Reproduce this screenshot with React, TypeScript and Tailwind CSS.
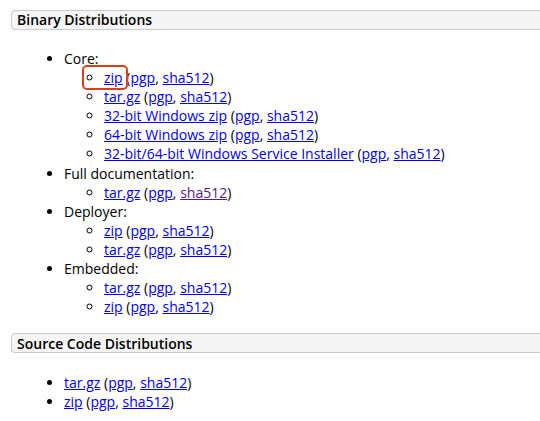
const font = { fontFamily: '"Open Sans", "Noto Sans", sans-serif' };

function A({ children, visited }: { children: React.ReactNode; visited?: boolean }) {
  return (
    <a href="#" className={`underline ${visited ? 'text-[#551a8b]' : 'text-[#0000ee]'}`}>
      {children}
    </a>
  );
}

function Sig({ visited }: { visited?: boolean }) {
  return (
    <>
      {' '}(<A>pgp</A>, <A visited={visited}>sha512</A>)
    </>
  );
}

function Item({ label, visited, boxed }: { label: string; visited?: boolean; boxed?: boolean }) {
  return (
    <li className="relative">
      {boxed && (
        <span className="absolute left-[-22px] top-[-3px] w-[46px] h-[25px] border-2 border-[#dd3f1c] rounded-[5px]" />
      )}
      <A>{label}</A>
      <Sig visited={visited} />
    </li>
  );
}

function Header({ title }: { title: string }) {
  return (
    <h3 className="ml-[11px] h-[20px] flex items-center pl-[5px] bg-[#f5f5f5] border border-r-0 border-[#cccccc] rounded-l-[4px] text-[14px] font-semibold text-black">
      {title}
    </h3>
  );
}

export default function App() {
  return (
    <div className="bg-white w-[540px] h-[421px] overflow-hidden pt-[10px] text-[14px] leading-[19.1px] text-black" style={font}>
      <Header title="Binary Distributions" />
      <ul className="list-disc pl-[64px] mt-[19px]">
        <li>
          Core:
          <ul className="list-[circle] pl-[40px]">
            <Item label="zip" boxed />
            <Item label="tar.gz" />
            <Item label="32-bit Windows zip" />
            <Item label="64-bit Windows zip" />
            <Item label="32-bit/64-bit Windows Service Installer" />
          </ul>
        </li>
        <li>
          Full documentation:
          <ul className="list-[circle] pl-[40px]">
            <Item label="tar.gz" visited />
          </ul>
        </li>
        <li>
          Deployer:
          <ul className="list-[circle] pl-[40px]">
            <Item label="zip" />
            <Item label="tar.gz" />
          </ul>
        </li>
        <li>
          Embedded:
          <ul className="list-[circle] pl-[40px]">
            <Item label="tar.gz" />
            <Item label="zip" />
          </ul>
        </li>
      </ul>
      <div className="mt-[17px]">
        <Header title="Source Code Distributions" />
      </div>
      <ul className="list-disc pl-[64px] mt-[20px]">
        <Item label="tar.gz" />
        <Item label="zip" />
      </ul>
    </div>
  );
}
